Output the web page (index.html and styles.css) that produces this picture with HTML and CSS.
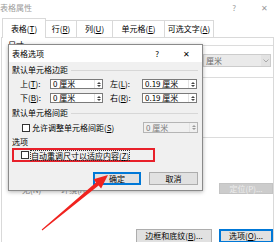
FILE: index.html
```html
<!DOCTYPE html>
<html>
<head>
    <meta charset="utf-8">
    <title>表格选项</title>
    <link rel="stylesheet" href="styles.css">
</head>
<body>
<div class="window">
    <div class="titlebar">
        <span class="title">表格属性</span>
        <span class="caption-btns"><span>?</span><span>✕</span></span>
    </div>
    <div class="tabs">
        <span class="tab active t-table">表格(<u>T</u>)</span>
        <span class="tab t-row">行(<u>R</u>)</span>
        <span class="tab t-col">列(<u>U</u>)</span>
        <span class="tab t-cell">单元格(<u>E</u>)</span>
        <span class="tab t-alt">可选文字(<u>A</u>)</span>
    </div>
    <div class="panel">
        <div class="group-head first"><span>尺寸</span><i class="rule"></i></div>
        <div class="unit-row">
            <div class="select">厘米<span class="chev"><svg width="6" height="4" viewBox="0 0 6 4"><polyline points="0.5,0.5 3,3 5.5,0.5" fill="none" stroke="#9a9a9a" stroke-width="0.8"/></svg></span></div>
        </div>
        <div class="group-head second"><span>对齐方式</span><i class="rule"></i></div>
        <div class="group-head third"><span>文字环绕</span><i class="rule"></i></div>
        <div class="wrap-row">
            <span class="ghost">无(N)</span>
            <span class="ghost">环绕(A)</span>
            <button class="btn pos" disabled>定位(P)...</button>
        </div>
        <div class="bottom-row">
            <button class="btn borders">边框和底纹(<u>B</u>)...</button>
            <button class="btn options focus">选项(<u>O</u>)...</button>
        </div>
    </div>

    <div class="dialog">
        <div class="dlg-title">
            <span>表格选项</span>
            <span class="caption-btns dark"><span>?</span><span>✕</span></span>
        </div>
        <div class="dlg-body">
            <div class="group-head"><span>默认单元格边距</span><i class="rule"></i></div>
            <div class="margins">
                <span>上(<u>T</u>):</span>
                <div class="field"><span class="val">0 厘米</span><span class="spin"><i class="up"></i><i class="down"></i></span></div>
                <span class="lbl-r">左(<u>L</u>):</span>
                <div class="field"><span class="val">0.19 厘米</span><span class="spin"><i class="up"></i><i class="down"></i></span></div>
                <span>下(<u>B</u>):</span>
                <div class="field"><span class="val">0 厘米</span><span class="spin"><i class="up"></i><i class="down"></i></span></div>
                <span class="lbl-r">右(<u>R</u>):</span>
                <div class="field"><span class="val">0.19 厘米</span><span class="spin"><i class="up"></i><i class="down"></i></span></div>
            </div>
            <div class="group-head gap"><span>默认单元格间距</span><i class="rule"></i></div>
            <div class="spacing-row">
                <span class="check"></span>
                <span>允许调整单元格间距(<u>S</u>)</span>
                <div class="field disabled"><span class="val">0 厘米</span><span class="spin"><i class="up"></i><i class="down"></i></span></div>
            </div>
            <div class="group-head gap-sm"><span>选项</span></div>
            <div class="red-box">
                <span class="check"></span>
                <span class="focus-text">自动重调尺寸以适应内容(<u>Z</u>)</span>
            </div>
            <div class="dlg-buttons">
                <button class="btn ok focus">确定</button>
                <button class="btn cancel">取消</button>
            </div>
        </div>
    </div>

    <svg class="arrow" width="276" height="242" viewBox="0 0 276 242">
        <polygon points="42.3,230.4 98.6,185.4 101.1,188.5 108,175 93.5,179.3 96,182.4 41.7,229.6" fill="#f0231f"/>
    </svg>
</div>
</body>
</html>
```

FILE: styles.css
```css
body{
    margin: 0;
    background: #fff;
    font-family: "Noto Sans CJK SC", sans-serif;
    font-size: 8px;
    line-height: 10px;
    color: #000;
}
u{
    text-decoration-thickness: 0.5px;
}
.window{
    position: relative;
    width: 276px;
    height: 242px;
    overflow: hidden;
    background: #fff;
}

/* background window */
.titlebar{
    height: 18px;
    display: flex;
    align-items: center;
    justify-content: space-between;
    color: #9a9a9a;
}
.title{
    margin-top: -3px;
}
.caption-btns{
    display: flex;
    gap: 25px;
    padding-right: 8px;
    margin-top: -2px;
}
.caption-btns.dark{
    color: #000;
    gap: 24px;
    padding-right: 12px;
    margin-top: 0;
}
.tabs{
    display: flex;
    align-items: flex-end;
    height: 19px;
    padding-left: 3px;
    position: relative;
    z-index: 1;
}
.tab{
    height: 17px;
    box-sizing: border-box;
    margin-left: -1px;
    border: 1px solid #d9d9d9;
    border-bottom: none;
    background: #fff;
    line-height: 15px;
    text-align: center;
}
.tab.active{
    height: 20px;
    margin-bottom: -1px;
    line-height: 19px;
}
.t-table{
    width: 44px;
}
.t-row{
    width: 32px;
}
.t-col{
    width: 37px;
}
.t-cell{
    width: 53px;
}
.t-alt{
    width: 50px;
}
.panel{
    margin-left: 1px;
    width: 273px;
    height: 210px;
    box-sizing: border-box;
    border: 1px solid #d9d9d9;
    padding: 0 0 0 6px;
}
.group-head{
    display: flex;
    align-items: center;
    gap: 3px;
    height: 12px;
}
.rule{
    flex: 1;
    height: 1px;
    background: #dcdcdc;
}
.group-head.first{
    margin-top: 1px;
}
.group-head.second{
    margin-top: 4px;
}
.group-head.third{
    margin-top: 48px;
}
.unit-row{
    display: flex;
    justify-content: flex-end;
    margin-top: 3px;
    padding-right: 2px;
}
.select{
    width: 68px;
    height: 13px;
    box-sizing: border-box;
    border: 1px solid #cccccc;
    background: #eaeaea;
    color: #6d6d6d;
    display: flex;
    align-items: center;
    padding-left: 2px;
}
.chev{
    margin-left: auto;
    width: 9px;
    height: 100%;
    display: flex;
    align-items: center;
    justify-content: center;
    background: #e2e2e2;
}
.wrap-row{
    display: flex;
    align-items: flex-end;
    height: 11px;
    margin-top: 40px;
}
.ghost{
    color: #8a8a8a;
    margin-left: 14px;
    line-height: 8px;
}
.ghost + .ghost{
    margin-left: 20px;
}
.bottom-row{
    display: flex;
    justify-content: flex-end;
    gap: 7px;
    height: 14px;
    margin-top: 35px;
}

/* buttons */
.btn{
    font: inherit;
    color: #000;
    height: 100%;
    padding: 0;
    border: 1px solid #adadad;
    background: #e1e1e1;
}
.btn.focus{
    border-color: #0078d7;
    box-shadow: inset 0 0 0 1px #0078d7;
}
.btn.pos{
    margin-left: auto;
    width: 54px;
    background: #cccccc;
    border-color: #c4c4c4;
    color: #ececec;
}
.btn.borders{
    width: 76px;
}
.btn.options{
    width: 54px;
}

/* front dialog */
.dialog{
    position: absolute;
    left: 8px;
    top: 44px;
    width: 195px;
    height: 147px;
    box-sizing: border-box;
    border: 1px solid #8a8a8a;
    background: #f0f0f0;
    box-shadow: 0 1px 4px rgba(0, 0, 0, 0.3);
    z-index: 2;
}
.dlg-title{
    height: 17px;
    background: #fff;
    display: flex;
    align-items: center;
    justify-content: space-between;
    padding-left: 3px;
}
.dlg-body{
    padding: 2px 4px 0 3px;
}
.dlg-body .rule{
    background: #d7d7d7;
}
.group-head.gap{
    margin-top: 4px;
}
.group-head.gap-sm{
    margin-top: 3px;
}
.margins{
    display: grid;
    grid-template-columns: 30px 53px 39px 55px;
    row-gap: 4px;
    align-items: center;
    margin: 3px 0 0 8px;
}
.lbl-r{
    padding-left: 7px;
}
.field{
    height: 10px;
    box-sizing: border-box;
    border: 1px solid #7a7a7a;
    background: #fff;
    display: flex;
    align-items: center;
    padding-left: 2px;
    line-height: 8px;
}
.val{
    flex: 1;
}
.spin{
    width: 7px;
    height: 100%;
    display: flex;
    flex-direction: column;
    align-items: center;
    justify-content: center;
    gap: 1px;
    border-left: 1px solid #e3e3e3;
}
.spin i{
    width: 0;
    height: 0;
    border-left: 2px solid transparent;
    border-right: 2px solid transparent;
}
.spin .up{
    border-bottom: 2px solid #444;
}
.spin .down{
    border-top: 2px solid #444;
}
.field.disabled{
    margin-left: auto;
    width: 55px;
    height: 11px;
    border-color: #b5b5b5;
    background: #f0f0f0;
    color: #7a7a7a;
}
.field.disabled .spin i{
    border-bottom-color: #9a9a9a;
    border-top-color: #9a9a9a;
}
.spacing-row{
    display: flex;
    align-items: center;
    gap: 2px;
    height: 11px;
    margin: 3px 0 0 10px;
}
.check{
    width: 8px;
    height: 8px;
    box-sizing: border-box;
    border: 1px solid #333;
    background: #fff;
    flex: none;
}
.red-box{
    width: 143px;
    height: 14px;
    box-sizing: border-box;
    border: 2px solid #e8202a;
    display: flex;
    align-items: center;
    gap: 2px;
    padding-left: 7px;
}
.focus-text{
    outline: 1px dotted #333;
    line-height: 9px;
}
.dlg-buttons{
    display: flex;
    justify-content: flex-end;
    gap: 8px;
    height: 13px;
    margin-top: 10px;
}
.btn.ok{
    width: 48px;
}
.btn.cancel{
    width: 49px;
}

.arrow{
    position: absolute;
    left: 0;
    top: 0;
    z-index: 3;
    pointer-events: none;
}
```
